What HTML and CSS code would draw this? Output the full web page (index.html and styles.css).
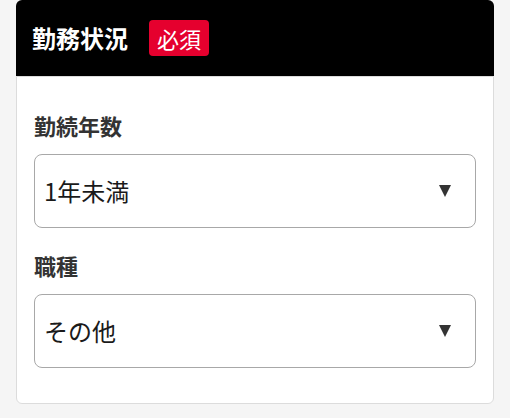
FILE: index.html
```html
<!DOCTYPE html>
<html lang="ja">
<head>
<meta charset="utf-8">
<title>勤務状況</title>
<link rel="stylesheet" href="styles.css">
</head>
<body>
<section class="card">
  <header class="card-head">
    <h2 class="card-title">勤務状況</h2>
    <span class="badge">必須</span>
  </header>
  <div class="card-body">
    <div class="field">
      <div class="field-label">勤続年数</div>
      <div class="select">
        <span class="select-value">1年未満</span>
        <span class="select-arrow"></span>
      </div>
    </div>
    <div class="field">
      <div class="field-label">職種</div>
      <div class="select">
        <span class="select-value">その他</span>
        <span class="select-arrow"></span>
      </div>
    </div>
  </div>
</section>
</body>
</html>
```
FILE: styles.css
```css
html, body {
  margin: 0;
  padding: 0;
  background: #f5f5f5;
  font-family: "Noto Sans CJK JP", "Noto Sans", "Liberation Sans", sans-serif;
}

.card {
  width: 478px;
  margin: 0 0 0 16px;
}

.card-head {
  height: 76px;
  background: #000;
  border-radius: 6px 6px 0 0;
  display: flex;
  align-items: center;
  padding: 0 16px;
  box-sizing: border-box;
}

.card-title {
  margin: 0;
  color: #fff;
  font-size: 24px;
  font-weight: 600;
  line-height: 1;
}

.badge {
  margin-left: 21px;
  height: 36px;
  line-height: 36px;
  padding: 0 8px;
  background: #e5002e;
  color: #fff;
  font-size: 22px;
  border-radius: 4px;
}

.card-body {
  background: #fff;
  border: 1px solid #dcdcdc;
  border-radius: 0 0 6px 6px;
  padding: 32px 17px 35px;
  display: flex;
  flex-direction: column;
  gap: 21px;
}

.field-label {
  font-size: 22px;
  font-weight: 600;
  color: #333;
  line-height: 33px;
  margin-bottom: 12px;
}

.select {
  height: 74px;
  box-sizing: border-box;
  border: 1px solid #a8a8a8;
  border-radius: 8px;
  display: flex;
  align-items: center;
  justify-content: space-between;
  padding: 0 24px 0 9px;
  background: #fff;
}

.select-value {
  font-size: 24px;
  color: #1a1a1a;
  line-height: 1;
}

.select-arrow {
  width: 0;
  height: 0;
  border-left: 6px solid transparent;
  border-right: 6px solid transparent;
  border-top: 12px solid #333;
}
```
